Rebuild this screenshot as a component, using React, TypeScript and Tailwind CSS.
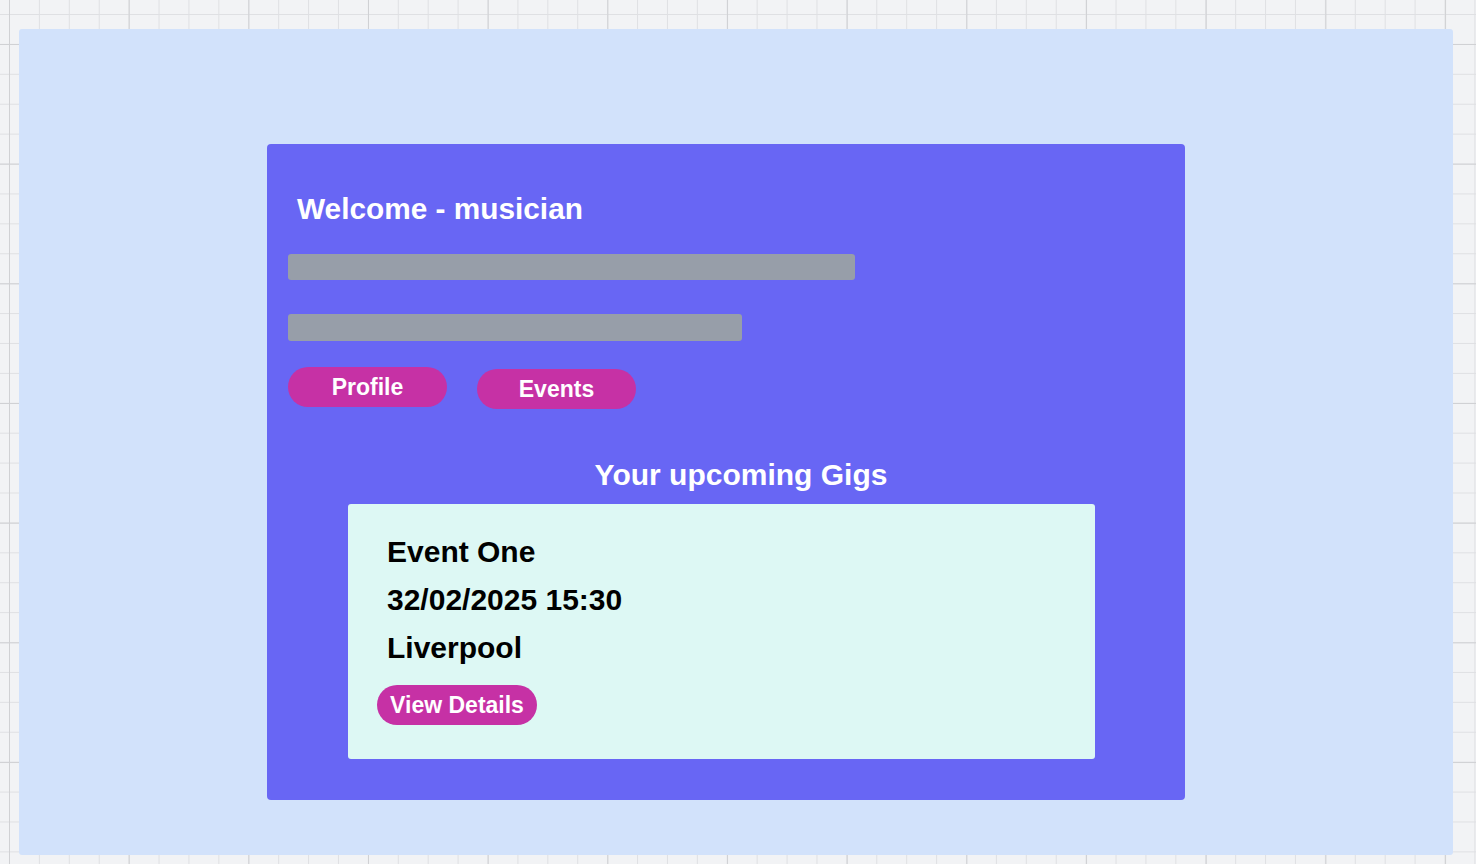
const Gig = () => {
  return (
    <div className="w-[747px] h-[255px] ml-[60px] mt-[11px] bg-[#ddf8f4] rounded-[3px] pt-[24px] pl-[39px]">
      <p className="text-[30px] leading-[48px] font-bold text-black">Event One</p>
      <p className="text-[30px] leading-[48px] font-bold text-black">32/02/2025 15:30</p>
      <p className="text-[30px] leading-[48px] font-bold text-black">Liverpool</p>
      <button className="mt-[13px] -ml-[10px] w-[160px] h-[40px] rounded-full bg-[#c631a5] text-white text-[23px] font-bold leading-none">
        View Details
      </button>
    </div>
  );
};

const App = () => {
  return (
    <div
      className="min-h-screen w-full overflow-hidden pt-[29px] pl-[19px] bg-[#f2f3f5] bg-[linear-gradient(to_right,#d0d1d4_1px,transparent_1px),linear-gradient(to_bottom,#d0d1d4_1px,transparent_1px),linear-gradient(to_right,#dfe0e3_1px,transparent_1px),linear-gradient(to_bottom,#dfe0e3_1px,transparent_1px)] bg-[size:119.68px_119.68px,119.68px_119.68px,29.92px_29.92px,29.92px_29.92px] bg-[position:9px_44px,9px_44px,9px_14px,9px_14px]"
      style={{ fontFamily: '"Liberation Sans", Arial, sans-serif' }}
    >
      {/* Page panel */}
      <div className="w-[1434px] h-[826px] bg-[#d2e2fb] rounded-[3px] pt-[115px] pl-[248px]">
        {/* Dashboard card */}
        <div className="w-[918px] h-[656px] bg-[#6866f4] rounded-[4px] pt-[47px] pl-[21px]">
          <h1 className="ml-[9px] text-[29.8px] leading-[36px] font-bold text-white">Welcome - musician</h1>

          {/* placeholder lines */}
          <div className="mt-[27px] w-[567px] h-[26px] bg-[#979ea9] rounded-[3px]" />
          <div className="mt-[34px] w-[454px] h-[27px] bg-[#979ea9] rounded-[3px]" />

          <div className="mt-[26px] flex items-start gap-[30px]">
            <button className="w-[159px] h-[40px] rounded-full bg-[#c631a5] text-white text-[23px] font-bold leading-none">
              Profile
            </button>
            <button className="mt-[2px] w-[159px] h-[40px] rounded-full bg-[#c631a5] text-white text-[23px] font-bold leading-none">
              Events
            </button>
          </div>

          <h2 className="mt-[48px] ml-[9px] text-center text-[30px] leading-[36px] font-bold text-white">
            Your upcoming Gigs
          </h2>

          <Gig />
        </div>
      </div>
    </div>
  );
};

export default App;
